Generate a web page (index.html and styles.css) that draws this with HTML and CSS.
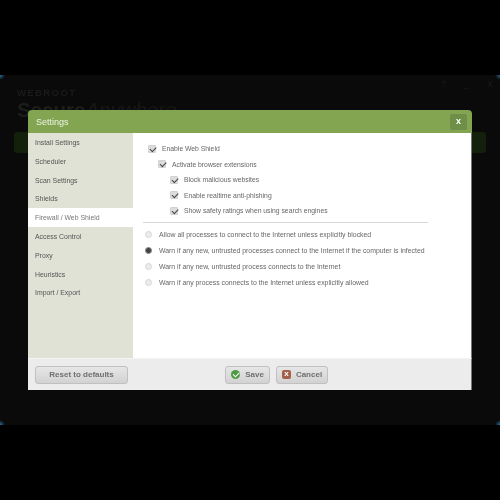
FILE: index.html
```html
<!DOCTYPE html>
<html lang="en">
<head>
    <meta charset="UTF-8">
    <title>SecureAnywhere - Settings</title>
    <link rel="stylesheet" href="styles.css">
</head>
<body>
    <div class="app">
        <div class="app-controls">
            <span>?</span>
            <span>_</span>
            <span>X</span>
        </div>
        <div class="brand">
            <div class="brand-top">WEBROOT</div>
            <div class="brand-name"><b>Secure</b><i>Anywhere</i></div>
        </div>
        <div class="app-bar"></div>

        <div class="dialog">
            <header class="dialog-head">
                <h1>Settings</h1>
                <a class="close" href="#">x</a>
            </header>
            <div class="dialog-body">
                <ul class="side">
                    <li>Install Settings</li>
                    <li>Scheduler</li>
                    <li>Scan Settings</li>
                    <li>Shields</li>
                    <li class="active">Firewall / Web Shield</li>
                    <li>Access Control</li>
                    <li>Proxy</li>
                    <li>Heuristics</li>
                    <li>Import / Export</li>
                </ul>
                <div class="content">
                    <div class="checks">
                        <label class="check"><span class="box"></span>Enable Web Shield</label>
                        <label class="check lvl1"><span class="box"></span>Activate browser extensions</label>
                        <label class="check lvl2"><span class="box"></span>Block malicious websites</label>
                        <label class="check lvl2"><span class="box"></span>Enable realtime anti-phishing</label>
                        <label class="check lvl2"><span class="box"></span>Show safety ratings when using search engines</label>
                    </div>
                    <div class="radios">
                        <label class="radio"><span class="dot"></span>Allow all processes to connect to the Internet unless explicitly blocked</label>
                        <label class="radio"><span class="dot on"></span>Warn if any new, untrusted processes connect to the Internet if the computer is infected</label>
                        <label class="radio"><span class="dot"></span>Warn if any new, untrusted process connects to the Internet</label>
                        <label class="radio"><span class="dot"></span>Warn if any process connects to the Internet unless explicitly allowed</label>
                    </div>
                </div>
            </div>
            <footer class="dialog-foot">
                <a class="btn reset" href="#">Reset to defaults</a>
                <div class="foot-main">
                    <a class="btn save" href="#"><span class="ico ico-ok"></span>Save</a>
                    <a class="btn cancel" href="#"><span class="ico ico-x">x</span>Cancel</a>
                </div>
            </footer>
        </div>
    </div>
</body>
</html>
```

FILE: styles.css
```css
* {
    margin: 0;
    padding: 0;
    box-sizing: border-box;
}

body {
    background-color: #000;
    font-family: 'Liberation Sans', Arial, sans-serif;
    overflow: hidden;
}

/* Window behind the dialog */
.app {
    position: relative;
    height: 350px;
    margin-top: 75px;
    padding: 12px 14px 0 17px;
    background:
        radial-gradient(circle at 0 0, #2a6f9c 0, transparent 5px),
        radial-gradient(circle at 100% 0, #2a5f85 0, transparent 5px),
        radial-gradient(circle at 0 100%, #2a6f9c 0, transparent 5px),
        radial-gradient(circle at 100% 100%, #2a6f9c 0, transparent 5px),
        #090a09;
}

.app-controls {
    position: absolute;
    top: 4px;
    right: 7px;
    display: flex;
    gap: 18px;
    font-size: 9px;
    color: #191b19;
}

.brand {
    filter: blur(0.6px);
}

.brand-top {
    font-size: 9.5px;
    font-weight: bold;
    letter-spacing: 1.4px;
    line-height: 11px;
    color: #191b19;
}

.brand-name {
    font-size: 20.5px;
    line-height: 24px;
    color: #1c1e1c;
}

.brand-name i {
    font-weight: normal;
    color: #161816;
}

.app-bar {
    height: 21px;
    margin: 10px 0 0 -3px;
    background: #12200c;
    border-radius: 3px;
}

/* Settings dialog */
.dialog {
    position: absolute;
    top: 35px;
    left: 28px;
    width: 444px;
    height: 280px;
    display: flex;
    flex-direction: column;
    border-radius: 4px 4px 0 0;
    filter: blur(0.35px);
}

.dialog-head {
    height: 23px;
    display: flex;
    justify-content: space-between;
    align-items: center;
    padding: 0 5px 0 8px;
    background: #83a552;
    border-radius: 4px 4px 0 0;
}

.dialog-head h1 {
    font-size: 9px;
    font-weight: normal;
    color: #eef3e4;
}

.close {
    width: 17px;
    height: 16px;
    border-radius: 2px;
    background: #6d8f47;
    color: #fff;
    font-size: 9px;
    font-weight: bold;
    line-height: 15px;
    text-align: center;
    text-decoration: none;
}

.dialog-body {
    height: 225px;
    display: flex;
    background: #fff;
    border-right: 1px solid #777;
}

/* Sidebar */
.side {
    width: 105px;
    list-style: none;
    background: #dfe2d5;
}

.side li {
    height: 18.8px;
    padding-left: 7px;
    font-size: 6.9px;
    line-height: 20px;
    color: #555;
}

.side li.active {
    background: #fff;
    color: #777;
}

/* Options */
.content {
    flex: 1;
    padding: 8px 43px 0 10px;
}

.checks {
    padding-bottom: 3px;
    border-bottom: 1px solid #d8d8d8;
}

.check {
    height: 15.5px;
    display: flex;
    align-items: center;
    padding-left: 5px;
    font-size: 6.8px;
    color: #666;
}

.check.lvl1 {
    padding-left: 15px;
}

.check.lvl2 {
    padding-left: 27px;
}

.box {
    position: relative;
    width: 8px;
    height: 8px;
    margin-right: 6px;
    background: #dcdcdc;
    border: 1px solid #d2d2d2;
    border-radius: 1px;
}

.box::after {
    content: '';
    position: absolute;
    top: 0.8px;
    left: 0.8px;
    width: 4.5px;
    height: 2.6px;
    border-left: 1.1px solid #444;
    border-bottom: 1.1px solid #444;
    transform: rotate(-45deg);
}

.radios {
    padding-top: 4px;
}

.radio {
    height: 16px;
    display: flex;
    align-items: center;
    padding-left: 2px;
    font-size: 6.9px;
    color: #666;
    white-space: nowrap;
}

.dot {
    width: 7px;
    height: 7px;
    margin-right: 7px;
    border-radius: 50%;
    background: #ececec;
    border: 1px solid #d6d6d6;
}

.dot.on {
    background: #444;
    border-color: #888;
}

/* Footer */
.dialog-foot {
    height: 32px;
    display: flex;
    align-items: center;
    padding: 0 143px 0 7px;
    background: #ececec;
    border-top: 1px solid #f4f4f4;
    border-right: 1px solid #777;
}

.foot-main {
    display: flex;
    gap: 6px;
    margin-left: 97px;
}

.btn {
    height: 18px;
    display: flex;
    align-items: center;
    justify-content: center;
    background: linear-gradient(#e6e6e6, #d2d2d2);
    border: 1px solid #c0c0c0;
    border-radius: 3px;
    font-size: 8px;
    font-weight: bold;
    color: #6f6f6f;
    text-decoration: none;
}

.reset {
    width: 94px;
}

.save {
    width: 45px;
}

.cancel {
    width: 52px;
}

.ico {
    width: 9px;
    height: 9px;
    margin-right: 5px;
}

.ico-ok {
    position: relative;
    border-radius: 50%;
    background: #4f9a45;
}

.ico-ok::after {
    content: '';
    position: absolute;
    top: 2px;
    left: 2px;
    width: 5px;
    height: 2.5px;
    border-left: 1.2px solid #fff;
    border-bottom: 1.2px solid #fff;
    transform: rotate(-45deg);
}

.ico-x {
    border-radius: 2px;
    background: #a5604a;
    color: #fff;
    font-size: 8px;
    line-height: 8px;
    text-align: center;
}
```
